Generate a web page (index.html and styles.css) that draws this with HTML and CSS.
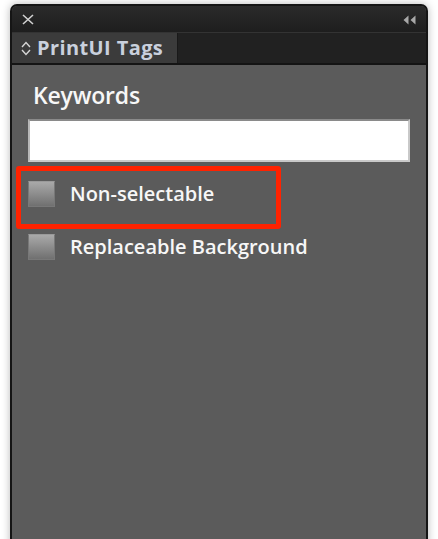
FILE: index.html
```html
<!DOCTYPE html>
<html>
<head>
<meta charset="utf-8">
<link rel="stylesheet" href="styles.css">
</head>
<body>
<div class="panel">
  <div class="titlebar">
    <svg class="close" width="12" height="11" viewBox="0 0 12 11"><path d="M1 1 L11 10 M11 1 L1 10" stroke="#d0d0d0" stroke-width="1.6" fill="none"/></svg>
    <svg class="collapse" width="14" height="10" viewBox="0 0 14 10"><path d="M0.5 5 L5.5 0.5 L5.5 9.5 Z M7.5 5 L12.5 0.5 L12.5 9.5 Z" fill="#a8a8a8"/></svg>
  </div>
  <div class="tabrow">
    <div class="tab">
      <svg class="updown" width="10" height="15" viewBox="0 0 10 15"><path d="M1 6 L5 1.5 L9 6 M1 9 L5 13.5 L9 9" stroke="#d6d6d6" stroke-width="1.4" fill="none"/></svg>
      <span class="tab-label">PrintUI Tags</span>
    </div>
  </div>
  <div class="content">
    <div class="label">Keywords</div>
    <div class="input"></div>
    <div class="row first"><span class="check"></span><span class="row-text">Non-selectable</span></div>
    <div class="row"><span class="check"></span><span class="row-text">Replaceable Background</span></div>
    <div class="highlight"></div>
  </div>
</div>
</body>
</html>
```
FILE: styles.css
```css
html, body {
  margin: 0;
  padding: 0;
  background: #ffffff;
  overflow: hidden;
}
body {
  width: 438px;
  height: 539px;
  font-family: "Open Sans", "Liberation Sans", sans-serif;
}
.panel {
  margin: 4px 0 0 10px;
  width: 418px;
  height: 560px;
  box-sizing: border-box;
  border: 2px solid #151515;
  border-bottom: none;
  border-radius: 7px 7px 0 0;
  background: #5b5b5b;
  box-shadow: 0 0 9px rgba(0, 0, 0, 0.28);
  display: flex;
  flex-direction: column;
  overflow: hidden;
}
.titlebar {
  height: 26px;
  flex: none;
  background: linear-gradient(#2b2b2b, #1e1e1e);
  display: flex;
  align-items: center;
  justify-content: space-between;
  padding: 0 9px 0 10px;
}
.close { margin-top: 1px; }
.collapse { margin-top: 1px; }
.tabrow {
  height: 33px;
  flex: none;
  background: #212121;
  border-top: 1px solid #333333;
  border-bottom: 2px solid #141414;
  box-sizing: border-box;
  display: flex;
}
.tab {
  width: 166px;
  background: #3b3b3b;
  display: flex;
  align-items: center;
  padding-left: 9px;
  box-sizing: border-box;
  border-right: 1px solid #191919;
}
.updown { margin-right: 6px; }
.tab-label {
  color: #c9d0dd;
  font-weight: 700;
  font-size: 20px;
  letter-spacing: 0.4px;
  line-height: 24px;
}
.content {
  position: relative;
  flex: 1;
  padding: 15px 16px 0 16px;
  display: flex;
  flex-direction: column;
}
.label {
  color: #f7f7f7;
  font-size: 23px;
  font-weight: 600;
  line-height: 30px;
  padding-left: 5px;
  letter-spacing: -0.2px;
}
.input {
  margin-top: 9px;
  height: 43px;
  box-sizing: border-box;
  background: #ffffff;
  border: 2px solid #c9c9c9;
  border-top-color: #8a8a8a;
  border-left-color: #b8b8b8;
}
.row {
  display: flex;
  align-items: center;
  height: 26px;
  margin-top: 27px;
}
.row.first { margin-top: 19px; }
.check {
  width: 27px;
  height: 26px;
  box-sizing: border-box;
  border: 1px solid #787878;
  border-top-color: #9a9a9a;
  background: linear-gradient(#a9a9a9, #707070);
  flex: none;
}
.row-text {
  margin-left: 15px;
  color: #f7f7f7;
  font-size: 20px;
  font-weight: 600;
  line-height: 26px;
}
.highlight {
  position: absolute;
  left: 4px;
  top: 101px;
  width: 265px;
  height: 63px;
  box-sizing: border-box;
  border: 5px solid #ff2200;
  border-radius: 3px;
}
```
